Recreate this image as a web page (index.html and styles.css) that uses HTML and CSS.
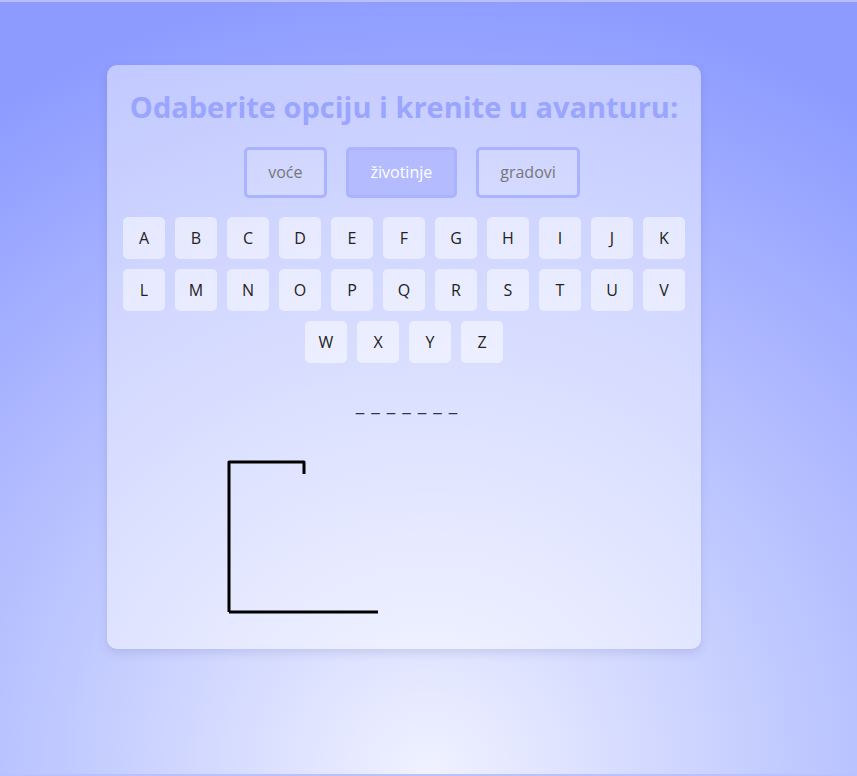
FILE: index.html
```html
<!DOCTYPE html>
<html lang="hr">
<head>
<meta charset="utf-8">
<title>Vješala</title>
<link rel="stylesheet" href="styles.css">
</head>
<body>
<div class="card">
  <h1 class="title">Odaberite opciju i krenite u avanturu:</h1>
  <div class="categories">
    <button class="cat">voće</button>
    <button class="cat active">životinje</button>
    <button class="cat">gradovi</button>
  </div>
  <div class="letters">
    <div class="row">
      <button class="key">A</button><button class="key">B</button><button class="key">C</button><button class="key">D</button><button class="key">E</button><button class="key">F</button><button class="key">G</button><button class="key">H</button><button class="key">I</button><button class="key">J</button><button class="key">K</button>
    </div>
    <div class="row">
      <button class="key">L</button><button class="key">M</button><button class="key">N</button><button class="key">O</button><button class="key">P</button><button class="key">Q</button><button class="key">R</button><button class="key">S</button><button class="key">T</button><button class="key">U</button><button class="key">V</button>
    </div>
    <div class="row">
      <button class="key">W</button><button class="key">X</button><button class="key">Y</button><button class="key">Z</button>
    </div>
  </div>
  <div class="word">_ _ _ _ _ _ _</div>
  <svg class="gallows" width="400" height="187" viewBox="0 0 400 187">
    <path d="M25 170 L25 20 L100 20 L100 32" fill="none" stroke="#000" stroke-width="3" stroke-linejoin="round"/>
    <path d="M25 170 L174 170" fill="none" stroke="#000" stroke-width="3"/>
  </svg>
</div>
</body>
</html>
```
FILE: styles.css
```css
html {
  background: #b9c1ff;
}
body {
  margin: 0;
  border-top: 2px solid #b7bfff;
  min-height: 774px;
  box-sizing: border-box;
  background: radial-gradient(circle farthest-corner at 50% 100%, #f0f2ff 0%, #c0c9ff 42%, #8d9bff 90%);
  font-family: "Open Sans", "Noto Sans", sans-serif;
  overflow: hidden;
}
.card {
  width: 594px;
  box-sizing: border-box;
  margin: 63px 0 0 107px;
  padding: 22px 17px 20px;
  background: rgba(255, 255, 255, 0.45);
  border-radius: 10px;
  box-shadow: 0 4px 10px rgba(60, 70, 140, 0.15);
  display: flex;
  flex-direction: column;
  align-items: center;
}
.title {
  margin: 0;
  font-size: 29px;
  line-height: 40px;
  font-weight: 700;
  color: #9aa5ff;
  white-space: nowrap;
}
.categories {
  display: flex;
  gap: 19px;
  margin-top: 20px;
  margin-left: 16px;
}
.cat {
  font-family: inherit;
  font-size: 16px;
  line-height: 21px;
  padding: 12px 21.5px;
  border: 3px solid #aab3ff;
  border-radius: 5px;
  background: rgba(255, 255, 255, 0.12);
  color: #777;
}
.cat.active {
  background: #b4bcff;
  color: #fff;
}
.letters {
  display: flex;
  flex-direction: column;
  align-items: center;
  gap: 10px;
  margin-top: 19px;
}
.row {
  display: flex;
  gap: 10px;
}
.key {
  width: 42px;
  height: 42px;
  padding: 0;
  border: none;
  border-radius: 5px;
  background: rgba(255, 255, 255, 0.5);
  font-family: inherit;
  font-size: 16px;
  color: #222;
}
.word {
  margin-top: 29px;
  margin-left: 6px;
  font-size: 20px;
  line-height: 24px;
  font-weight: 600;
  color: #2e3452;
  letter-spacing: 0.9px;
}
.gallows {
  display: block;
  margin-top: 26px;
}
```
